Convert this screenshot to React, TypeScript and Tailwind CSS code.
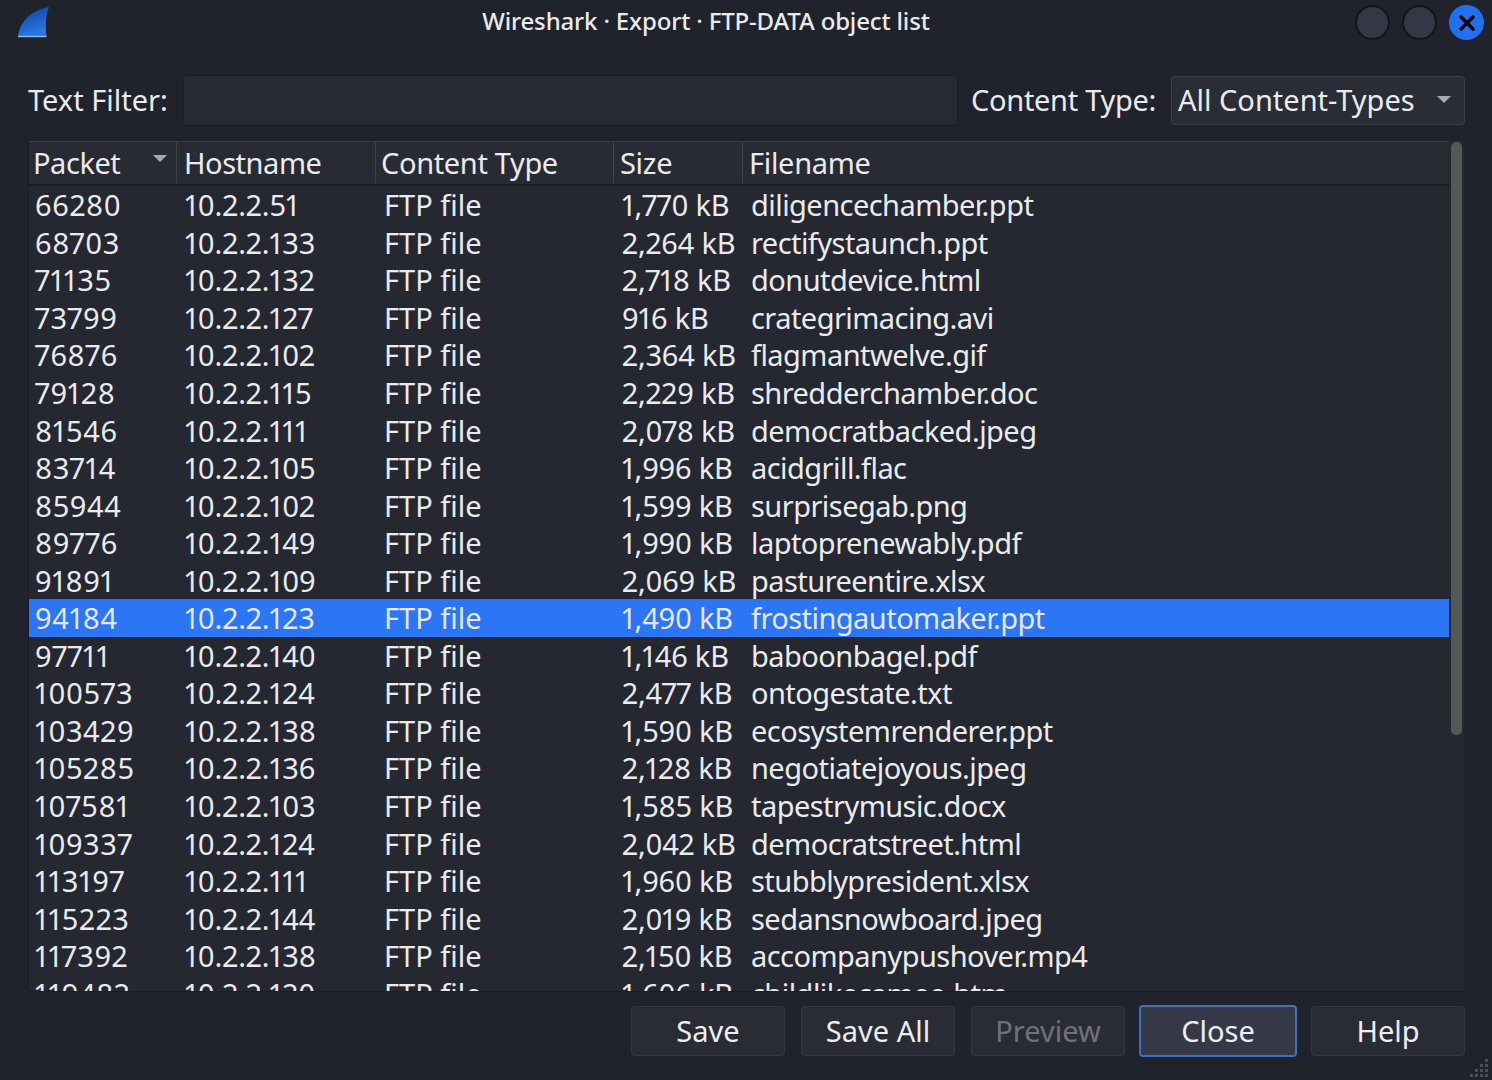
const rows: [string, string, string, string][] = [
  ["66280", "10.2.2.51", "1,770 kB", "diligencechamber.ppt"],
  ["68703", "10.2.2.133", "2,264 kB", "rectifystaunch.ppt"],
  ["71135", "10.2.2.132", "2,718 kB", "donutdevice.html"],
  ["73799", "10.2.2.127", "916 kB", "crategrimacing.avi"],
  ["76876", "10.2.2.102", "2,364 kB", "flagmantwelve.gif"],
  ["79128", "10.2.2.115", "2,229 kB", "shredderchamber.doc"],
  ["81546", "10.2.2.111", "2,078 kB", "democratbacked.jpeg"],
  ["83714", "10.2.2.105", "1,996 kB", "acidgrill.flac"],
  ["85944", "10.2.2.102", "1,599 kB", "surprisegab.png"],
  ["89776", "10.2.2.149", "1,990 kB", "laptoprenewably.pdf"],
  ["91891", "10.2.2.109", "2,069 kB", "pastureentire.xlsx"],
  ["94184", "10.2.2.123", "1,490 kB", "frostingautomaker.ppt"],
  ["97711", "10.2.2.140", "1,146 kB", "baboonbagel.pdf"],
  ["100573", "10.2.2.124", "2,477 kB", "ontogestate.txt"],
  ["103429", "10.2.2.138", "1,590 kB", "ecosystemrenderer.ppt"],
  ["105285", "10.2.2.136", "2,128 kB", "negotiatejoyous.jpeg"],
  ["107581", "10.2.2.103", "1,585 kB", "tapestrymusic.docx"],
  ["109337", "10.2.2.124", "2,042 kB", "democratstreet.html"],
  ["113197", "10.2.2.111", "1,960 kB", "stubblypresident.xlsx"],
  ["115223", "10.2.2.144", "2,019 kB", "sedansnowboard.jpeg"],
  ["117392", "10.2.2.138", "2,150 kB", "accompanypushover.mp4"],
  ["119482", "10.2.2.120", "1,606 kB", "childlikecameo.htm"],
];

const SELECTED = "94184";

function Caret() {
  return (
    <svg width="14" height="7" viewBox="0 0 14 7" className="shrink-0">
      <path d="M0 0h14L7 7z" fill="#a9abb2" />
    </svg>
  );
}

function Fin() {
  return (
    <svg width="34" height="32" viewBox="0 0 34 32" className="ml-[17px] mt-[6px] shrink-0">
      <defs>
        <linearGradient id="fin" x1="0" y1="0" x2="0.4" y2="1">
          <stop offset="0" stopColor="#0b3f9c" />
          <stop offset="1" stopColor="#2a78e8" />
        </linearGradient>
      </defs>
      <path d="M1 30.5C3 14 16 4 32 1c-3 8-4 18-2.500 29.500z" fill="url(#fin)" />
      <path d="M1 30.500h28.500" stroke="#8ab8f2" strokeWidth="1.500" />
    </svg>
  );
}

function WinButton({ children, active }: { children?: React.ReactNode; active?: boolean }) {
  return (
    <div
      className={`flex h-[35px] w-[35px] items-center justify-center rounded-full ${
        active ? "bg-[#2170ee]" : "border-2 border-[#14151b] bg-[#343744]"
      }`}
    >
      {children}
    </div>
  );
}

function Btn({ label, tone = "normal" }: { label: string; tone?: "normal" | "off" | "main" }) {
  const cls =
    tone === "main"
      ? "h-[52px] w-[158px] border-2 border-[#3f6fbd] bg-[#353948] text-[#eceef2]"
      : tone === "off"
        ? "h-[50px] w-[154px] border border-[#353741] bg-[#2a2c35] text-[#70727a]"
        : "h-[50px] w-[154px] border border-[#353741] bg-[#2a2c35] text-[#eceef2]";
  return (
    <div className={`flex items-center justify-center rounded-[4px] pb-[1px] text-[29px] tracking-[0px] ${cls}`}>
      {label}
    </div>
  );
}

export default function App() {
  return (
    <div className="flex h-[1080px] w-[1492px] flex-col overflow-hidden bg-[#20222c] font-['Noto_Sans',sans-serif] text-[29px] leading-none text-[#e9ebef]">
      {/* title bar */}
      <div className="relative flex h-[44px] items-start">
        <Fin />
        <div className="flex-1 pt-[6px] pl-[6px] text-center text-[24px] leading-[30px] tracking-[-0.16px] font-medium">
          Wireshark · Export · FTP-DATA object list
        </div>
        <div className="mt-[5px] mr-[8px] flex gap-[12px]">
          <WinButton />
          <WinButton />
          <WinButton active>
            <svg width="18" height="18" viewBox="0 0 18 18">
              <path d="M3 3l12 12M15 3L3 15" stroke="#04060c" strokeWidth="3.600" strokeLinecap="round" />
            </svg>
          </WinButton>
        </div>
      </div>

      {/* filter row */}
      <div className="mt-[31px] flex h-[51px] items-center pl-[28px]">
        <span className="w-[155px] pb-[2px]">Text Filter:</span>
        <div className="h-[51px] w-[775px] rounded-[3px] border border-[#1c1e26] bg-[#272933]" />
        <span className="ml-[13px] w-[200px] pb-[2px] tracking-[-0.3px]">Content Type:</span>
        <div className="flex h-[49px] w-[294px] items-center justify-between rounded-[4px] border border-[#3c3e4a] bg-[#2a2c36] pr-[13px] pb-[2px] pl-[6px]">
          <span>All Content-Types</span>
          <Caret />
        </div>
      </div>

      {/* object table */}
      <div className="mt-[15px] ml-[28px] flex h-[851px] w-[1437px] overflow-hidden border-b border-l border-[#1b1c24]">
        <div className="flex w-[1420px] min-w-0 flex-col overflow-hidden bg-[#252731]">
          <div className="flex h-[45px] shrink-0 items-center border-t border-b-2 border-t-[#3a3c46] border-b-[#191a21] bg-[#282a34] pb-[1px]">
            <div className="flex h-full w-[148px] items-center border-r border-[#3f414b] pr-[9px] pl-[4px]">
              <span className="flex-1 tracking-[-0.45px]">Packet</span>
              <span className="-mt-[9px]">
                <Caret />
              </span>
            </div>
            <div className="flex h-full w-[199px] items-center border-r border-[#3f414b] pl-[7px] tracking-[-0.45px]">Hostname</div>
            <div className="flex h-full w-[238px] items-center border-r border-[#3f414b] pl-[5px] tracking-[-0.35px]">Content Type</div>
            <div className="flex h-full w-[129px] items-center border-r border-[#3f414b] pl-[6px] tracking-[-0.3px]">Size</div>
            <div className="flex h-full flex-1 items-center pl-[6px] tracking-[-0.3px]">Filename</div>
          </div>
          {rows.map((r) => (
            <div
              key={r[0]}
              className={`flex h-[37.55px] shrink-0 items-center ${r[0] === SELECTED ? "bg-[#2a76f5] text-[#e8e6f5]" : ""}`}
            >
              <div className="w-[148px] pl-[6px] tracking-[0.6px] proportional-nums">{r[0]}</div>
              <div className="w-[199px] pl-[8px] tracking-[-0.1px] proportional-nums">{r[1]}</div>
              <div className="w-[238px] pl-[8px]">FTP file</div>
              <div className="w-[129px] pl-[8px] tracking-[-0.2px] proportional-nums">{r[2]}</div>
              <div className="flex-1 pl-[8px] tracking-[-0.55px]">{r[3]}</div>
            </div>
          ))}
        </div>
        <div className="w-[16px] bg-[#252731] pt-[1px] pl-[2px]">
          <div className="h-[593px] w-[11px] rounded-[5px] bg-[#565759]" />
        </div>
      </div>

      {/* buttons */}
      <div className="mt-[13px] flex items-center pl-[631px]">
        <Btn label="Save" />
        <div className="w-[16px]" />
        <Btn label="Save All" />
        <div className="w-[16px]" />
        <Btn label="Preview" tone="off" />
        <div className="w-[14px]" />
        <Btn label="Close" tone="main" />
        <div className="w-[14px]" />
        <Btn label="Help" />
      </div>

      {/* size grip */}
      <div className="relative flex-1">
        <svg width="24" height="24" viewBox="0 0 24 24" className="absolute right-[1px] bottom-0">
          {[
            [18, 3], [18, 8], [13, 8], [18, 13], [13, 13], [8, 13], [18, 18], [13, 18], [8, 18], [3, 18],
          ].map(([x, y]) => (
            <rect key={`${x}-${y}`} x={x} y={y} width="3" height="3" fill="#4d4f58" />
          ))}
        </svg>
      </div>
    </div>
  );
}
